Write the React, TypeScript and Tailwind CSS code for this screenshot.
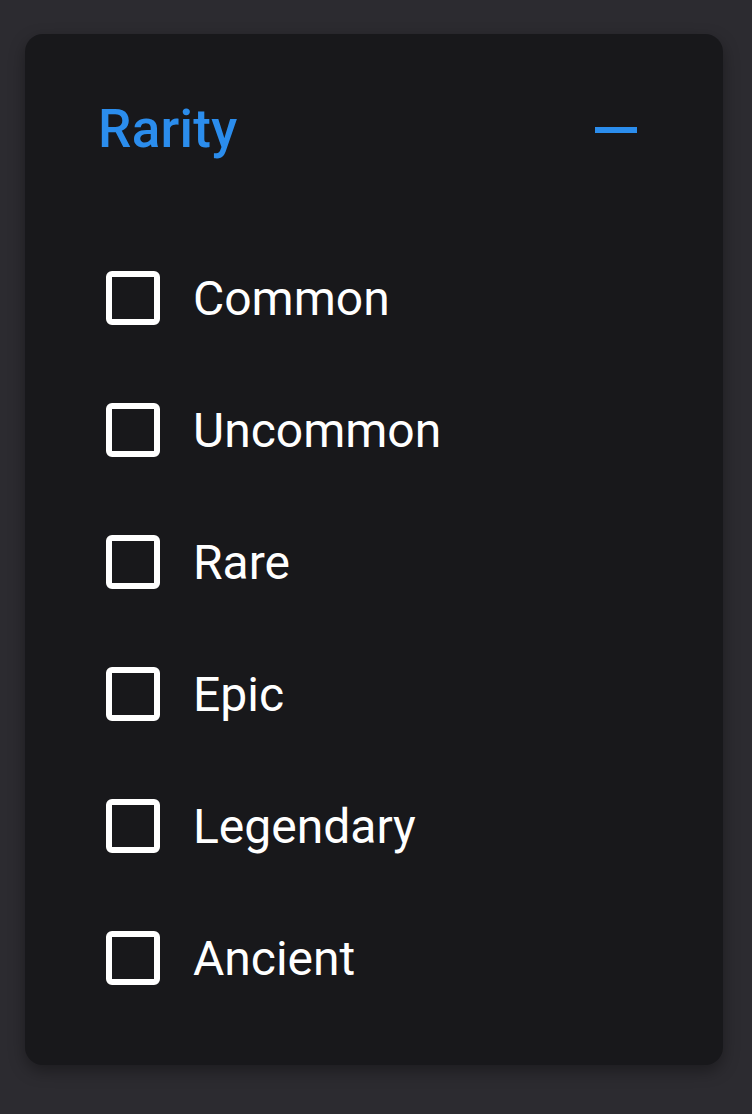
import React from "react";

const items = ["Common", "Uncommon", "Rare", "Epic", "Legendary", "Ancient"];

export default function App() {
  return (
    <div
      className="min-h-[1114px] w-full bg-[#2c2b30] pt-[34px] pl-[25px]"
      style={{ fontFamily: "Roboto, 'Liberation Sans', sans-serif" }}
    >
      <div className="flex h-[1031px] w-[698px] flex-col rounded-[18px] bg-[#18181b] shadow-[0_6px_16px_rgba(0,0,0,0.35)]">
        <div className="flex items-center justify-between pt-[69px] pl-[73px] pr-[86px]">
          <span className="text-[53px] font-medium leading-none tracking-[0.3px] text-[#2b8ded]">Rarity</span>
          <span className="block h-[6px] w-[42px] bg-[#2b8ded]" />
        </div>
        <div className="mt-[115px] flex flex-col gap-[78px] pl-[81px]">
          {items.map((it) => (
            <label key={it} className="flex items-center">
              <span className="block h-[54px] w-[54px] rounded-[6px] border-[6px] border-white" />
              <span className="ml-[33px] mt-[2px] text-[48px] leading-none text-white">{it}</span>
            </label>
          ))}
        </div>
      </div>
    </div>
  );
}
